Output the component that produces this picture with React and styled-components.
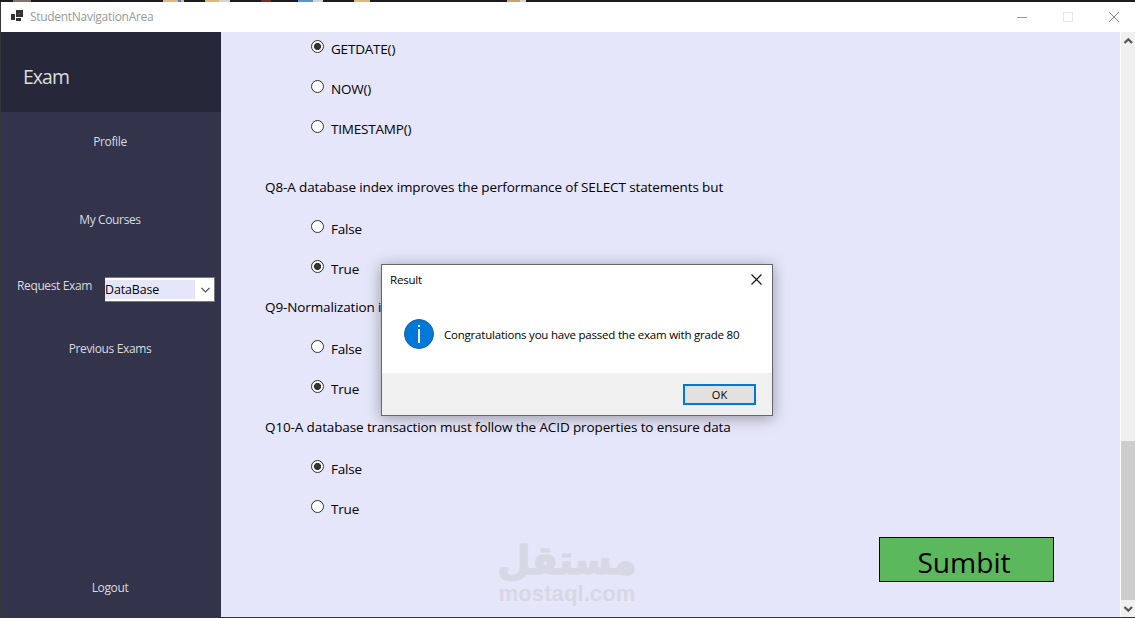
import React from 'react'
import styled, { createGlobalStyle } from 'styled-components'

const questions = [
  {
    options: ['GETDATE()', 'NOW()', 'TIMESTAMP()'],
    answer: 'GETDATE()',
    gap: 20,
  },
  {
    title: 'Q8-A database index improves the performance of SELECT statements but',
    options: ['False', 'True'],
    answer: 'True',
  },
  {
    title: 'Q9-Normalization is the process of organizing data to reduce',
    options: ['False', 'True'],
    answer: 'True',
  },
  {
    title: 'Q10-A database transaction must follow the ACID properties to ensure data',
    options: ['False', 'True'],
    answer: 'False',
  },
]

const TitleBar = () => {
  return (
    <Header>
      <svg width="13" height="12" viewBox="0 0 13 12">
        <path d="M0 4h4v6H0zM5 0h7v7H5zM5 8h5v3H5z" fill="#333" />
        <path d="M7.5 4.5l2-1.5" stroke="#777" strokeWidth="0.8" />
      </svg>
      <WindowName>StudentNavigationArea</WindowName>
      <WindowControls>
        <svg width="10" height="10" viewBox="0 0 10 10">
          <path d="M0 5.5h10" stroke="#9b9b8d" />
        </svg>
        <svg width="10" height="10" viewBox="0 0 10 10">
          <rect x="0.5" y="0.5" width="9" height="9" fill="none" stroke="#e6e6e6" />
        </svg>
        <svg width="10" height="10" viewBox="0 0 10 10">
          <path d="M0 0l10 10M10 0L0 10" stroke="#8f8583" />
        </svg>
      </WindowControls>
    </Header>
  )
}

const SideMenu = () => {
  return (
    <Side>
      <Brand>Exam</Brand>
      <MenuItem $height={60}>Profile</MenuItem>
      <MenuItem $height={96}>My Courses</MenuItem>
      <RequestRow>
        <RequestLabel>Request Exam</RequestLabel>
        <Combo>
          <ComboValue>DataBase</ComboValue>
          <svg width="19" height="22" viewBox="0 0 19 22">
            <path d="M6.5 9l4 4 4-4" fill="none" stroke="#555" strokeWidth="1.2" />
          </svg>
        </Combo>
      </RequestRow>
      <MenuItem $height={62}>Previous Exams</MenuItem>
      <Spacer />
      <MenuItem $height={58}>Logout</MenuItem>
    </Side>
  )
}

const Question = ({ title, options, answer, gap }) => {
  return (
    <QuestionBlock $gap={gap}>
      {title && <QuestionTitle>{title}</QuestionTitle>}
      {options.map((option) => (
        <Option key={option}>
          <Radio $checked={option === answer} />
          <OptionText>{option}</OptionText>
        </Option>
      ))}
    </QuestionBlock>
  )
}

const ResultDialog = () => {
  return (
    <Dialog>
      <DialogHeader>
        <span>Result</span>
        <svg width="11" height="11" viewBox="0 0 11 11">
          <path d="M0.5 0.5l10 10M10.5 0.5l-10 10" stroke="#111" strokeWidth="1.1" />
        </svg>
      </DialogHeader>
      <DialogBody>
        <svg width="30" height="30" viewBox="0 0 30 30">
          <circle cx="15" cy="15" r="14.5" fill="#0078d7" stroke="#1a5fa8" />
          <path d="M14 6h2v2h-2zM14 10h2v14h-2z" fill="#fff" />
        </svg>
        <Message>Congratulations you have passed the exam with grade 80</Message>
      </DialogBody>
      <DialogFooter>
        <OkButton>OK</OkButton>
      </DialogFooter>
    </Dialog>
  )
}

const Watermark = () => {
  return (
    <WatermarkLayer width="140" height="66" viewBox="0 0 140 66">
      <g transform="translate(70 34) scale(0.38 0.4)">
        <WatermarkArabic x="0" y="0">مستقل</WatermarkArabic>
      </g>
      <WatermarkLatin x="70" y="61">mostaql.com</WatermarkLatin>
    </WatermarkLayer>
  )
}

const App = () => {
  return (
    <>
      <GlobalStyle />
      <Desktop>
        <Window>
          <TitleBar />
          <Content>
            <SideMenu />
            <Main>
              {questions.map((question, index) => (
                <Question key={index} {...question} />
              ))}
              <SubmitButton>Sumbit</SubmitButton>
            </Main>
            <ScrollBar>
              <ScrollArrow viewBox="0 0 14 17">
                <path d="M3.5 11l3.8-3.8L11 11" fill="none" stroke="#555" strokeWidth="2.2" />
              </ScrollArrow>
              <ScrollThumb />
              <ScrollArrow viewBox="0 0 14 17">
                <path d="M3.5 7l3.8 3.8L11 7" fill="none" stroke="#555" strokeWidth="2.2" />
              </ScrollArrow>
            </ScrollBar>
          </Content>
        </Window>
        <Watermark />
        <ResultDialog />
      </Desktop>
    </>
  )
}

const GlobalStyle = createGlobalStyle`
  * {
    box-sizing: border-box;
  }

  body {
    margin: 0;
    overflow: hidden;
    font-family: 'Open Sans', sans-serif;
  }

  svg {
    display: block;
    flex-shrink: 0;
  }
`

const Desktop = styled.div`
  position: relative;
  width: 1135px;
  height: 618px;
  padding: 2px 0 1px 1px;
  overflow: hidden;
  background-color: #36363c;
  background-image: linear-gradient(
    90deg,
    #1e1a22 13px, #80746c 13px 31px, #1e1a22 31px 163px,
    #dcb87c 163px 178px, #4a7fae 178px 181px, #dcb87c 181px 184px, #1e1a22 184px 205px,
    #dcb87c 205px 219px, #d5d5d5 219px 230px, #1e1a22 230px 261px,
    #7c2a25 261px 271px, #1e1a22 271px 298px, #5b93cf 298px 313px, #d5d5d5 313px 323px,
    #1e1a22 323px 354px, #dcb87c 354px 370px, #1e1a22 370px 507px,
    #c9a274 507px 520px, #d5d5d5 520px 526px, #1e1a22 526px
  );
  background-size: 100% 2px;
  background-repeat: no-repeat;
`

const Window = styled.div`
  display: flex;
  flex-direction: column;
  height: 100%;
`

const Header = styled.header`
  display: flex;
  align-items: center;
  height: 30px;
  padding: 0 16px 0 10px;
  background: #fff;

  & > svg {
    margin-bottom: 2px;
  }
`

const WindowName = styled.span`
  margin-left: 6px;
  font-size: 12px;
  letter-spacing: -0.3px;
  line-height: 30px;
  color: #999;
`

const WindowControls = styled.div`
  display: flex;
  gap: 36px;
  margin-left: auto;
  padding-bottom: 1px;
`

const Content = styled.div`
  display: flex;
  height: 585px;
`

const Side = styled.nav`
  display: flex;
  flex-direction: column;
  width: 220px;
  flex-shrink: 0;
  background: #33334c;
  color: #dcdcdc;
  font-size: 12px;
  letter-spacing: -0.37px;
`

const Brand = styled.div`
  height: 80px;
  padding-left: 22px;
  background: #27273a;
  font-size: 19.4px;
  letter-spacing: -0.9px;
  line-height: 90px;
`

const MenuItem = styled.div`
  display: flex;
  align-items: center;
  justify-content: center;
  height: ${(props) => props.$height}px;
  padding: 0 2px 2px 0;
`

const RequestRow = styled.div`
  display: flex;
  height: 50px;
  padding-left: 16px;
`

const RequestLabel = styled.span`
  width: 88px;
  line-height: 36px;
`

const Combo = styled.div`
  display: flex;
  justify-content: space-between;
  width: 110px;
  height: 25px;
  margin-top: 9px;
  padding: 1px 0;
  border: 1px solid #7a7a7a;
  border-left: none;
  background: #fff;
`

const ComboValue = styled.span`
  width: 90px;
  height: 19px;
  margin-top: 1px;
  background: #e6e6fa;
  color: #000;
  font-size: 12.4px;
  letter-spacing: -0.1px;
  line-height: 20px;
`

const Spacer = styled.div`
  flex: 1;
`

const Main = styled.main`
  display: flex;
  flex-direction: column;
  flex: 1;
  padding: 0 0 0 44px;
  background: #e6e6fa;
  color: #000;
  font-size: 13.5px;
  letter-spacing: -0.12px;
  overflow: hidden;
`

const QuestionBlock = styled.section`
  display: flex;
  flex-direction: column;
  flex-shrink: 0;
  margin-bottom: ${(props) => props.$gap || 0}px;

  &:first-child {
    margin-top: -5px;
  }
`

const QuestionTitle = styled.div`
  height: 40px;
  line-height: 40px;
  white-space: nowrap;
`

const Option = styled.label`
  display: flex;
  align-items: center;
  height: 40px;
  padding-left: 46px;
`

const Radio = styled.span`
  width: 13px;
  height: 13px;
  margin-bottom: 1px;
  border: 1px solid #333;
  border-radius: 50%;
  background: ${(props) =>
    props.$checked ? 'radial-gradient(circle, #333 3.2px, #fff 3.9px)' : '#fff'};
`

const OptionText = styled.span`
  margin-left: 7px;
  padding-top: 4px;
  letter-spacing: -0.2px;
`

const SubmitButton = styled.button`
  width: 175px;
  height: 45px;
  flex-shrink: 0;
  margin: 10px 0 0 614px;
  padding: 4px 5px 0 0;
  border: 1px solid #000;
  background: #5cb85c;
  color: #000;
  font-family: inherit;
  font-size: 28.2px;
  line-height: 38px;
  text-align: center;
`

const ScrollBar = styled.div`
  display: flex;
  flex-direction: column;
  width: 15px;
  border-left: 1px solid #fff;
  background: #f0f0f0;
`

const ScrollArrow = styled.svg`
  width: 14px;
  height: 17px;
`

const ScrollThumb = styled.div`
  height: 159px;
  margin-top: auto;
  background: #cdcdcd;
`

const Dialog = styled.div`
  position: absolute;
  left: 381px;
  top: 264px;
  display: flex;
  flex-direction: column;
  width: 392px;
  height: 152px;
  border: 1px solid #65656e;
  background: #fff;
  box-shadow: 0 2px 14px rgba(0, 0, 0, 0.35);
  color: #000;
  font-size: 11.5px;
  letter-spacing: -0.21px;
`

const DialogHeader = styled.div`
  display: flex;
  align-items: center;
  justify-content: space-between;
  height: 28px;
  padding: 0 10px 0 8px;
`

const DialogBody = styled.div`
  display: flex;
  align-items: center;
  height: 80px;
  padding: 2px 0 0 22px;
`

const Message = styled.span`
  margin: 0 0 0 10px;
  white-space: nowrap;
`

const DialogFooter = styled.div`
  display: flex;
  align-items: center;
  justify-content: flex-end;
  flex: 1;
  padding-right: 16px;
  background: #f0f0f0;
`

const OkButton = styled.button`
  width: 73px;
  height: 21px;
  padding: 1px 0 0;
  border: 2px solid #0078d7;
  background: #e1e1e1;
  color: #000;
  font-family: inherit;
  font-size: 11px;
  line-height: 16px;
`

const WatermarkLayer = styled.svg`
  position: absolute;
  left: 497px;
  top: 540px;
  overflow: visible;
  fill: #d8d8e5;
`

const WatermarkArabic = styled.text`
  font-family: 'DejaVu Sans', sans-serif;
  font-size: 100px;
  font-weight: bold;
  text-anchor: middle;
  stroke: #d8d8e5;
  stroke-width: 4px;
  stroke-linejoin: round;
`

const WatermarkLatin = styled.text`
  font-family: 'Liberation Sans', sans-serif;
  font-size: 22.2px;
  font-weight: bold;
  text-anchor: middle;
`

export default App
